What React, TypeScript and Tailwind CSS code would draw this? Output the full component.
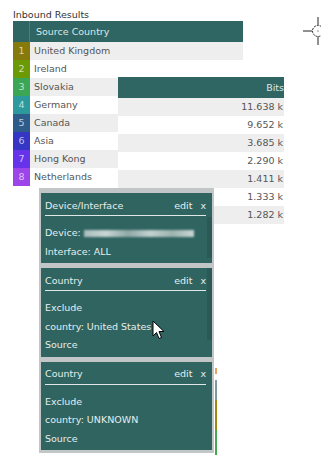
import React from 'react';

const countries = [
  { n: 1, name: 'United Kingdom', color: '#877a0c' },
  { n: 2, name: 'Ireland', color: '#6b9a05' },
  { n: 3, name: 'Slovakia', color: '#3ba655' },
  { n: 4, name: 'Germany', color: '#2c9a9c' },
  { n: 5, name: 'Canada', color: '#2d5c8a' },
  { n: 6, name: 'Asia', color: '#3636c4' },
  { n: 7, name: 'Hong Kong', color: '#6633ea' },
  { n: 8, name: 'Netherlands', color: '#9b45ea' },
];

const bits = ['11.638 k', '9.652 k', '3.685 k', '2.290 k', '1.411 k', '1.333 k', '1.282 k'];

type PanelProps = {
  title: string;
  lines: React.ReactNode[];
  strip?: string;
};

// filter card in the side stack
function FilterPanel({ title, lines, strip }: PanelProps) {
  return (
    <div className="relative bg-[#2f6461] pl-[4px] pr-[6px] pb-[2px] text-[#e6eeed]">
      {strip && <div className={`absolute right-0 w-[5px] bg-[#2a5956] ${strip}`} />}
      <div className="flex h-[23px] items-center justify-between pt-[4px] border-b border-[#dfe8e7]">
        <span>{title}</span>
        <span className="flex gap-[8px]">
          <span>edit</span>
          <span>x</span>
        </span>
      </div>
      <div className="relative pt-[8px] leading-[18.5px]">
        {lines.map((l, i) => (
          <div key={i} className="whitespace-nowrap">{l}</div>
        ))}
      </div>
    </div>
  );
}

export default function App() {
  return (
    <div className="relative w-[321px] h-[469px] overflow-hidden bg-white text-[9.5px] text-[#555] [font-family:'DejaVu_Sans',Verdana,sans-serif]">
      <div className="pl-[13px] pt-[8px] h-[21px] leading-[14px] text-[#333]">Inbound Results</div>

      {/* Source country table */}
      <div className="ml-[13px] w-[230px]">
        <div className="flex h-[21px] bg-[#2f6563] text-[#dce7e6]">
          <div className="w-[17px] border-r border-[#4a7f7d]" />
          <div className="flex items-center pl-[6px] pt-[1px]">Source Country</div>
        </div>
        {countries.map((c, i) => (
          <div key={c.n} className={`flex h-[18px] ${i % 2 === 0 ? 'bg-[#eeeeee]' : 'bg-white'}`}>
            <div
              className="flex w-[17px] items-center justify-center pt-[1px] text-white/70"
              style={{ backgroundColor: c.color }}
            >
              {c.n}
            </div>
            <div className="flex items-center pl-[4px] pt-[1px]">{c.name}</div>
          </div>
        ))}
      </div>

      {/* Bits table on top */}
      <div className="absolute left-[118px] top-[77px] w-[166px] overflow-hidden">
        <div className="flex h-[21px] items-center justify-end bg-[#2f6563] pt-[2px] text-[#dce7e6]">
          <span className="whitespace-nowrap">Bits</span>
        </div>
        {bits.map((b, i) => (
          <div
            key={b}
            className={`flex h-[18px] items-center justify-end pt-[1px] pr-[1px] ${i % 2 === 0 ? 'bg-[#eeeeee]' : 'bg-white'}`}
          >
            {b}
          </div>
        ))}
      </div>

      {/* peek of content behind the filter stack */}
      <div className="absolute left-[215px] top-[368px] flex w-[2px] flex-col">
        <div className="h-[6px] bg-[#e8a060]" />
        <div className="h-[6px]" />
        <div className="h-[20px] bg-[#7c98a4]" />
        <div className="h-[30px] bg-[#9a8a10]" />
        <div className="h-[25px] bg-[#44a84c]" />
      </div>

      {/* Filter stack */}
      <div className="absolute left-[39px] top-[188px] flex w-[175px] flex-col gap-[5px] bg-[#c3c6c6] px-[2px] pt-[5px] pb-[3px]">
        <FilterPanel
          title="Device/Interface"
          strip="top-[24px] bottom-[5px]"
          lines={[
            <span className="flex items-center">
              Device:&nbsp;
              <span className="inline-block h-[7px] w-[110px] bg-[linear-gradient(90deg,#a9bdbb,#c9d6d4,#8fa9a6,#c3d1cf,#9db3b0,#cad6d4)] blur-[0.8px]" />
            </span>,
            'Interface: ALL',
          ]}
        />
        <FilterPanel
          title="Country"
          strip="top-0 bottom-[17px]"
          lines={['Exclude', 'country: United States', 'Source']}
        />
        <FilterPanel title="Country" lines={['Exclude', 'country: UNKNOWN', 'Source']} />
      </div>

      {/* mouse pointer */}
      <svg className="absolute left-[152px] top-[320px]" width="14" height="21" viewBox="0 0 14 21">
        <path d="M1 1 L1 16 L4.5 12.5 L7 18.5 L9.5 17.5 L7 11.5 L12 11.5 Z" fill="white" stroke="black" strokeWidth="1" strokeLinejoin="round" />
      </svg>

      {/* crosshair */}
      <svg className="absolute left-[300px] top-[14px]" width="21" height="34" viewBox="0 0 21 34">
        <line x1="3" y1="17" x2="12" y2="17" stroke="#222" strokeWidth="1" />
        <line x1="18" y1="3" x2="18" y2="11" stroke="#222" strokeWidth="1" />
        <line x1="18" y1="23" x2="18" y2="31" stroke="#222" strokeWidth="1" />
        <circle cx="18" cy="17" r="5.5" fill="none" stroke="#222" strokeWidth="1" strokeDasharray="2 1" />
        <rect x="17.5" y="16.5" width="1" height="1" fill="#222" />
      </svg>
    </div>
  );
}
